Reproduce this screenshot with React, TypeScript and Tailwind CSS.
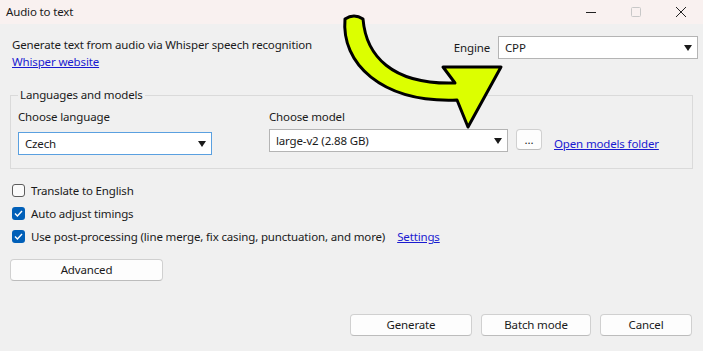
import React from 'react';

const font = { fontFamily: '"Noto Sans", "Segoe UI", sans-serif', letterSpacing: '-0.15px' };

const Caret = () => (
    <svg width="8" height="6" viewBox="0 0 8 6" className="shrink-0">
        <path d="M0 0 L8 0 L4 6 Z" fill="#1a1a1a" />
    </svg>
);

interface ComboProps {
    value: string;
    className: string;
}

const Combo: React.FC<ComboProps> = ({ value, className }) => (
    <div className={`flex items-center justify-between bg-white pl-[6px] pr-[5px] ${className}`}>
        <span>{value}</span>
        <Caret />
    </div>
);

const CheckBox: React.FC<{ checked: boolean; label: string }> = ({ checked, label }) => (
    <div className="flex items-center gap-[6px] h-[23px]">
        {checked ? (
            <span className="w-[13px] h-[13px] rounded-[3px] bg-[#005fb8] flex items-center justify-center">
                <svg width="9" height="7" viewBox="0 0 9 7">
                    <path d="M1 3.6 L3.4 6 L8 1" fill="none" stroke="white" strokeWidth="1.4" />
                </svg>
            </span>
        ) : (
            <span className="w-[13px] h-[13px] rounded-[3px] border border-[#5c5c5c] bg-[#fafafa]" />
        )}
        <span>{label}</span>
    </div>
);

const Button: React.FC<{ label: string; className: string }> = ({ label, className }) => (
    <div
        className={`flex items-center justify-center rounded-[4px] border border-[#d0d0d0] border-b-[#bcbcbc] bg-[#fdfdfd] ${className}`}
    >
        {label}
    </div>
);

const Arrow = () => (
    <svg
        width="180"
        height="130"
        viewBox="0 0 180 130"
        className="absolute left-[331px] top-[5px] pointer-events-none"
    >
        <path
            d="M14 14 C10 58 50 98 126 95 L137 122 L170 62 L112 62 L124 78 C60 80 35 50 32 14 Q23 8 14 14 Z"
            fill="#dcff00"
            stroke="#000"
            strokeWidth="3"
            strokeLinejoin="round"
        />
    </svg>
);

export default function App() {
    return (
        <div
            className="relative w-[703px] h-[351px] flex flex-col bg-[#f0f0f0] text-[11.5px] text-[#1a1a1a] overflow-hidden"
            style={font}
        >
            {/* title bar */}
            <div className="h-[24px] flex items-center justify-between bg-[#f9f1f0] pl-[6px]">
                <span>Audio to text</span>
                <div className="flex items-center h-full">
                    <div className="w-[45px] flex justify-center">
                        <svg width="10" height="10" viewBox="0 0 10 10">
                            <path d="M0 5.5 H10" stroke="#222" strokeWidth="1" />
                        </svg>
                    </div>
                    <div className="w-[45px] flex justify-center">
                        <svg width="10" height="10" viewBox="0 0 10 10">
                            <rect x="0.5" y="0.5" width="9" height="9" rx="1" fill="none" stroke="#c8c8c8" />
                        </svg>
                    </div>
                    <div className="w-[45px] flex justify-center">
                        <svg width="10" height="10" viewBox="0 0 10 10">
                            <path d="M0 0 L10 10 M10 0 L0 10" stroke="#222" strokeWidth="1" />
                        </svg>
                    </div>
                </div>
            </div>

            {/* header */}
            <div className="flex justify-between pl-[12px] pr-[5px] pt-[11px]">
                <div className="flex flex-col leading-[17px] pt-[1px]">
                    <span>Generate text from audio via Whisper speech recognition</span>
                    <span className="text-[#1a1ad0] underline">Whisper website</span>
                </div>
                <div className="flex items-center gap-[8px] h-[23px] mt-[1px]">
                    <span>Engine</span>
                    <Combo value="CPP" className="w-[200px] h-[23px] border border-[#b4b4b4]" />
                </div>
            </div>

            {/* languages and models */}
            <fieldset className="ml-[10px] w-[683px] mt-[17px] border border-[#dadada] h-[82px] px-[7px]">
                <legend className="px-[2px] leading-[16px]">Languages and models</legend>
                <div className="flex pt-[5px]">
                    <div className="flex flex-col w-[251px]">
                        <span className="leading-[17px]">Choose language</span>
                        <Combo
                            value="Czech"
                            className="mt-[7px] w-[194px] h-[23px] border border-[#5aa0e0]"
                        />
                    </div>
                    <div className="flex flex-col">
                        <span className="leading-[17px]">Choose model</span>
                        <div className="flex items-center mt-[4px]">
                            <Combo value="large-v2 (2.88 GB)" className="w-[239px] h-[23px] border border-[#b4b4b4]" />
                            <Button label="..." className="ml-[8px] w-[26px] h-[21px] -mt-[2px]" />
                            <span className="ml-[12px] mt-[6px] text-[#1a1ad0] underline">Open models folder</span>
                        </div>
                    </div>
                </div>
            </fieldset>

            {/* options */}
            <div className="flex flex-col pl-[12px] mt-[10px]">
                <CheckBox checked={false} label="Translate to English" />
                <CheckBox checked={true} label="Auto adjust timings" />
                <div className="flex items-center">
                    <CheckBox checked={true} label="Use post-processing (line merge, fix casing, punctuation, and more)" />
                    <span className="ml-[12px] text-[#1a1ad0] underline">Settings</span>
                </div>
            </div>

            <Button label="Advanced" className="ml-[10px] mt-[11px] w-[153px] h-[22px]" />

            {/* bottom buttons */}
            <div className="mt-auto mb-[15px] flex justify-end gap-[9px] pr-[11px]">
                <Button label="Generate" className="w-[122px] h-[22px]" />
                <Button label="Batch mode" className="w-[110px] h-[22px]" />
                <Button label="Cancel" className="w-[92px] h-[22px]" />
            </div>

            <Arrow />
        </div>
    );
}
